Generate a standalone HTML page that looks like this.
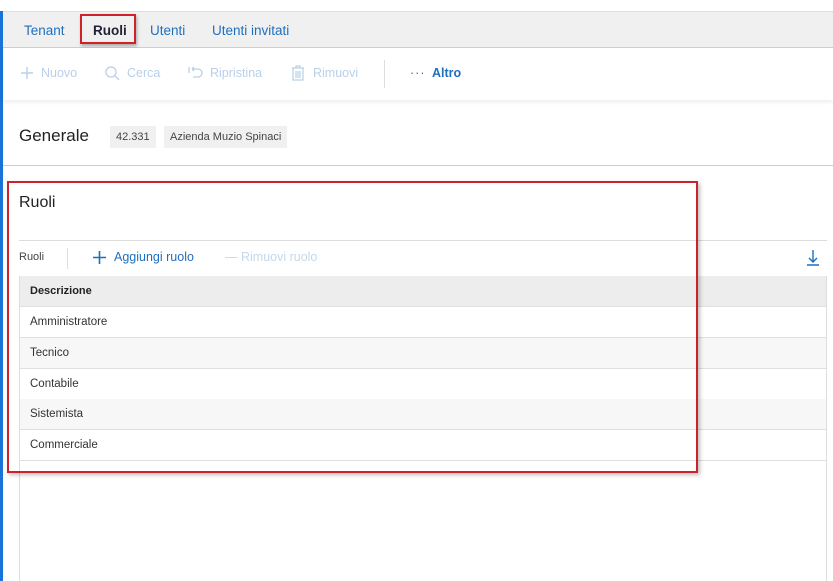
<!DOCTYPE html>
<html><head><style>
*{margin:0;padding:0;box-sizing:border-box}
body{width:833px;height:581px;overflow:hidden;background:#fff;font-family:"Liberation Sans",sans-serif;position:relative}
.a{position:absolute}
.blue{left:0;top:11px;width:3px;height:570px;background:#1a73d9}
.tabs{left:3px;top:11px;width:830px;height:37px;background:#f0f0f0;border-top:1px solid #ddd;border-bottom:1px solid #cfcfcf}
.tab{position:absolute;top:11px;font-size:13.5px;color:#1f6fbf}
.tb{position:absolute;top:66px;font-size:12.5px;color:#b8d0e8}
.chip{position:absolute;top:126px;height:22px;background:#f0f0f0;font-size:11px;color:#444;line-height:22px;padding:0 6px}
.row{position:absolute;left:19px;width:808px;height:31px;border-bottom:1px solid #e0e0e0;font-size:11.5px;color:#333;padding-left:11px;line-height:30px}
</style></head><body>
<div class="a blue"></div>
<div class="a tabs">
<span class="tab" style="left:21px">Tenant</span>
<span class="tab" style="left:90px;color:#223;font-weight:bold">Ruoli</span>
<span class="tab" style="left:147px">Utenti</span>
<span class="tab" style="left:209px">Utenti invitati</span>
</div>
<div class="a" style="left:80px;top:14px;width:56px;height:30px;border:2px solid #d0202a;box-shadow:1px 2px 3px rgba(0,0,0,.3)"></div>
<div class="a" style="left:3px;top:48px;width:830px;height:52px;background:#fff;box-shadow:0 2px 4px rgba(0,0,0,.08)"></div>
<svg class="a" style="left:20px;top:66px" width="14" height="14"><path d="M7 1v12M1 7h12" stroke="#b8d0e8" stroke-width="1.4"/></svg><span class="tb" style="left:41px">Nuovo</span>
<svg class="a" style="left:104px;top:65px" width="16" height="16"><circle cx="7" cy="7" r="5" fill="none" stroke="#b8d0e8" stroke-width="1.3"/><path d="M11 11l4 4" stroke="#b8d0e8" stroke-width="1.3"/></svg><span class="tb" style="left:127px">Cerca</span>
<svg class="a" style="left:187px;top:65px" width="18" height="16"><path d="M2 2v6M5 4h6a4 4 0 010 8H6M5 4l2-2M5 4l2 2" fill="none" stroke="#b8d0e8" stroke-width="1.3"/></svg><span class="tb" style="left:210px">Ripristina</span>
<svg class="a" style="left:290px;top:64px" width="16" height="18"><path d="M2 4h12M6 4V2h4v2M3 4v12h10V4M6 7v7M8 7v7M10 7v7" fill="none" stroke="#b8d0e8" stroke-width="1.2"/></svg><span class="tb" style="left:313px">Rimuovi</span>
<div class="a" style="left:384px;top:60px;width:1px;height:28px;background:#ddd"></div>
<span class="tb" style="left:410px;color:#1f6fbf;letter-spacing:1px">···</span><span class="tb" style="left:432px;color:#1f6fbf;font-weight:bold">Altro</span>
<div class="a" style="left:19px;top:126px;font-size:17px;color:#222">Generale</div>
<div class="chip" style="left:110px">42.331</div>
<div class="chip" style="left:164px">Azienda Muzio Spinaci</div>
<div class="a" style="left:3px;top:165px;width:830px;height:1px;background:#ccc"></div>
<div class="a" style="left:19px;top:194px;font-size:16px;color:#222">Ruoli</div>
<div class="a" style="left:19px;top:240px;width:808px;height:1px;background:#ddd"></div>
<div class="a" style="left:19px;top:251px;font-size:11px;color:#444">Ruoli</div>
<div class="a" style="left:67px;top:248px;width:1px;height:21px;background:#ddd"></div>
<svg class="a" style="left:93px;top:251px" width="13" height="13"><path d="M6.5 0v13M0 6.5h13" stroke="#1f6fbf" stroke-width="1.6"/></svg>
<span class="a" style="left:114px;top:250px;font-size:12.5px;color:#1f6fbf">Aggiungi ruolo</span>
<span class="a" style="left:225px;top:250px;font-size:12.5px;color:#c4d8ec">— Rimuovi ruolo</span>
<svg class="a" style="left:806px;top:249px" width="14" height="18"><path d="M7 1v12M3 9l4 4 4-4M1 16h12" fill="none" stroke="#1f6fbf" stroke-width="1.4"/></svg>
<div class="row" style="top:276px;background:#ededed;font-weight:bold;font-size:11px;color:#222">Descrizione</div>
<div class="row" style="top:307px">Amministratore</div>
<div class="row" style="top:338px;background:#f7f7f7">Tecnico</div>
<div class="row" style="top:369px">Contabile</div>
<div class="row" style="top:399px;background:#f7f7f7">Sistemista</div>
<div class="row" style="top:430px">Commerciale</div>
<div class="a" style="left:19px;top:276px;width:808px;height:305px;border-left:1px solid #ddd;border-right:1px solid #ddd"></div>
<div class="a" style="left:7px;top:181px;width:691px;height:292px;border:2px solid #d0202a;box-shadow:2px 2px 4px rgba(0,0,0,.25)"></div>
</body></html>
